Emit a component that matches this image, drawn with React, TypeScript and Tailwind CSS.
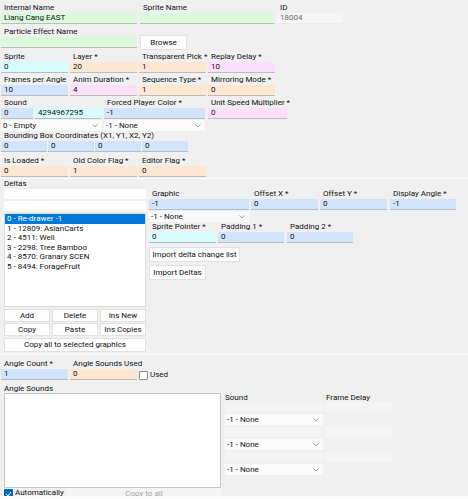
import React from 'react';

// field background tints used by the editor
const BG = {
  green: 'bg-[#dbf9db]',
  cyan: 'bg-[#d7fcfc]',
  peach: 'bg-[#fde6d2]',
  pink: 'bg-[#fbdffb]',
  blue: 'bg-[#d1e4fb]',
  id: 'bg-[#f5f5f5]',
};

const Label: React.FC<{ text: string }> = ({ text }) => (
  <div className="h-[10px] leading-[10px] pl-[3px] whitespace-nowrap">{text}</div>
);

const Box: React.FC<{ value?: string; bg: string; className?: string }> = ({ value, bg, className = '' }) => (
  <div
    className={`h-[11px] leading-[10px] pl-[3px] border-b border-[#bcbcbc] whitespace-nowrap overflow-hidden ${bg} ${className}`}
  >
    {value}
  </div>
);

const Field: React.FC<{ label: string; value?: string; bg: string; w: string; boxClass?: string }> = ({
  label,
  value,
  bg,
  w,
  boxClass,
}) => (
  <div className={`${w} shrink-0`}>
    <Label text={label} />
    <Box value={value} bg={bg} className={boxClass} />
  </div>
);

const Chevron = () => (
  <svg width="6" height="4" viewBox="0 0 6 4" className="shrink-0">
    <polyline points="0.5,0.5 3,3 5.5,0.5" fill="none" stroke="#8a8a8a" strokeWidth="0.8" />
  </svg>
);

const Combo: React.FC<{ value: string; w: string }> = ({ value, w }) => (
  <div className={`${w} h-[11px] bg-[#fafafa] flex items-center justify-between pl-[2px] pr-[4px] shrink-0`}>
    <span className="leading-[10px] whitespace-nowrap">{value}</span>
    <Chevron />
  </div>
);

const Btn: React.FC<{ text: string; className?: string }> = ({ text, className = '' }) => (
  <div
    className={`bg-[#fdfdfd] border border-[#e1e1e1] flex items-center justify-center whitespace-nowrap ${className}`}
  >
    {text}
  </div>
);

const deltas = [
  '0 - Re-drawer -1',
  '1 - 12809: AsianCarts',
  '2 - 4511: Well',
  '3 - 2298: Tree Bamboo',
  '4 - 8570: Granary SCEN',
  '5 - 8494: ForageFruit',
];

export default function App() {
  return (
    <div className="w-[468px] h-[499px] bg-[#f0f0f0] overflow-hidden text-[8px] text-[#111] font-[Roboto,'Liberation_Sans',sans-serif]">
      <div className="pt-[3px] pl-[1px]">
        {/* names */}
        <div className="flex gap-[3px] mb-[3px]">
          <Field label="Internal Name" value="Liang Cang EAST" bg={BG.green} w="w-[136px]" />
          <Field label="Sprite Name" bg={BG.green} w="w-[134px]" />
          <Field label="ID" value="18004" bg={BG.id} w="w-[66px]" boxClass="text-[#6e6e6e] border-[#ececec]" />
        </div>
        <div className="flex gap-[3px] items-start mb-[2px] h-[23px]">
          <Field label="Particle Effect Name" bg={BG.green} w="w-[136px]" />
          <Btn text="Browse" className="w-[47px] h-[15px] mt-[8px]" />
        </div>

        {/* sprite settings */}
        <div className="flex gap-[2px] mb-[2px]">
          <Field label="Sprite" value="0" bg={BG.cyan} w="w-[67px]" />
          <Field label="Layer *" value="20" bg={BG.peach} w="w-[67px]" />
          <Field label="Transparent Pick *" value="1" bg={BG.peach} w="w-[67px]" />
          <Field label="Replay Delay *" value="10" bg={BG.pink} w="w-[67px]" />
        </div>
        <div className="flex gap-[2px] mb-[2px]">
          <Field label="Frames per Angle" value="10" bg={BG.blue} w="w-[67px]" />
          <Field label="Anim Duration *" value="4" bg={BG.pink} w="w-[67px]" />
          <Field label="Sequence Type *" value="1" bg={BG.peach} w="w-[67px]" />
          <Field label="Mirroring Mode *" value="0" bg={BG.peach} w="w-[67px]" />
        </div>
        <div className="flex">
          <div className="w-[101px] shrink-0">
            <Label text="Sound" />
            <div className="flex gap-[2px]">
              <Box value="0" bg={BG.blue} className="w-[32px]" />
              <Box value="4294967295" bg={BG.cyan} className="w-[67px]" />
            </div>
          </div>
          <div className="ml-[2px]">
            <Field label="Forced Player Color *" value="-1" bg={BG.blue} w="w-[101px]" />
          </div>
          <div className="ml-[3px]">
            <Field label="Unit Speed Multiplier *" value="0" bg={BG.pink} w="w-[79px]" />
          </div>
        </div>
        <div className="flex gap-[2px] mt-[1px]">
          <Combo value="0 - Empty" w="w-[101px]" />
          <Combo value="-1 - None" w="w-[101px]" />
        </div>

        <Label text="Bounding Box Coordinates (X1, Y1, X2, Y2)" />
        <div className="flex gap-[1px] mb-[4px]">
          <Box value="0" bg={BG.blue} className="w-[46px] h-[10px]" />
          <Box value="0" bg={BG.blue} className="w-[46px] h-[10px]" />
          <Box value="0" bg={BG.blue} className="w-[46px] h-[10px]" />
          <Box value="0" bg={BG.blue} className="w-[46px] h-[10px]" />
        </div>
        <div className="flex gap-[2px]">
          <Field label="Is Loaded *" value="0" bg={BG.peach} w="w-[67px]" />
          <Field label="Old Color Flag *" value="1" bg={BG.peach} w="w-[67px]" />
          <Field label="Editor Flag *" value="0" bg={BG.peach} w="w-[67px]" />
        </div>
      </div>

      <div className="h-[1px] bg-[#fafafa] mt-[1px]" />

      {/* deltas */}
      <div className="pl-[1px]">
        <Label text="Deltas" />
        <div className="flex">
          <div className="w-[142px] ml-[3px] shrink-0 flex flex-col">
            <div className="h-[10px] bg-white" />
            <div className="h-[10px] bg-white mt-[2px]" />
            <div className="h-[94px] bg-white border border-[#dcdcdc] mt-[2px] overflow-hidden">
              {deltas.map((d, i) => (
                <div
                  key={d}
                  className={`h-[9.5px] leading-[9.5px] pl-[2px] whitespace-nowrap ${
                    i === 0 ? 'bg-[#0078d7] text-white' : ''
                  }`}
                >
                  {d}
                </div>
              ))}
            </div>
            <div className="grid grid-cols-3 gap-x-[2px] gap-y-[1px] mt-[2px]">
              <Btn text="Add" className="h-[13px]" />
              <Btn text="Delete" className="h-[13px]" />
              <Btn text="Ins New" className="h-[13px]" />
              <Btn text="Copy" className="h-[13px]" />
              <Btn text="Paste" className="h-[13px]" />
              <Btn text="Ins Copies" className="h-[13px]" />
            </div>
            <Btn text="Copy all to selected graphics" className="h-[14px] mt-[2px]" />
          </div>

          <div className="ml-[3px] flex flex-col items-start">
            <div className="flex">
              <Field label="Graphic" value="-1" bg={BG.blue} w="w-[100px]" boxClass="h-[10px]" />
              <div className="ml-[2px]">
                <Field label="Offset X *" value="0" bg={BG.blue} w="w-[67px]" boxClass="h-[10px]" />
              </div>
              <div className="ml-[2px]">
                <Field label="Offset Y *" value="0" bg={BG.blue} w="w-[67px]" boxClass="h-[10px]" />
              </div>
              <div className="ml-[3px]">
                <Field label="Display Angle *" value="-1" bg={BG.blue} w="w-[66px]" boxClass="h-[10px]" />
              </div>
            </div>
            <div className="mt-[1px]">
              <Combo value="-1 - None" w="w-[100px]" />
            </div>
            <div className="flex">
              <Field label="Sprite Pointer *" value="0" bg={BG.cyan} w="w-[67px]" boxClass="h-[10px]" />
              <div className="ml-[2px]">
                <Field label="Padding 1 *" value="0" bg={BG.blue} w="w-[66px]" boxClass="h-[10px]" />
              </div>
              <div className="ml-[3px]">
                <Field label="Padding 2 *" value="0" bg={BG.blue} w="w-[66px]" boxClass="h-[10px]" />
              </div>
            </div>
            <Btn text="Import delta change list" className="w-[91px] h-[15px] mt-[4px]" />
            <Btn text="Import Deltas" className="w-[57px] h-[15px] mt-[3px]" />
          </div>
        </div>
      </div>

      <div className="h-[1px] bg-[#fafafa] mt-[2px]" />

      {/* angle sounds */}
      <div className="pl-[1px] pt-[4px]">
        <div className="flex items-end">
          <Field label="Angle Count *" value="1" bg={BG.blue} w="w-[67px]" boxClass="h-[10px]" />
          <div className="ml-[2px]">
            <Field label="Angle Sounds Used" value="0" bg={BG.peach} w="w-[67px]" boxClass="h-[10px]" />
          </div>
          <div className="flex items-center h-[10px] ml-[2px]">
            <div className="w-[9px] h-[9px] bg-white border border-[#8a8a8a] rounded-[1px]" />
            <span className="ml-[2px] leading-[10px]">Used</span>
          </div>
        </div>
        <div className="mt-[4px] h-[9px] leading-[9px] pl-[3px]">Angle Sounds</div>
        <div className="flex">
          <div className="w-[217px] h-[95px] ml-[3px] bg-white border border-[#c4c4c4] shrink-0" />
          <div className="ml-[4px]">
            <div className="flex h-[9px] leading-[9px]">
              <span className="w-[101px]">Sound</span>
              <span>Frame Delay</span>
            </div>
            {[0, 1, 2].map((r) => (
              <div key={r} className={r > 0 ? 'mt-[2px]' : ''}>
                <div className="flex gap-[3px]">
                  <div className="w-[98px] h-[10px] bg-[#f3f3f3]" />
                  <div className="w-[66px] h-[10px] bg-[#f4f4f4]" />
                </div>
                <div className="mt-[2px]">
                  <Combo value="-1 - None" w="w-[98px]" />
                </div>
              </div>
            ))}
          </div>
        </div>
        <div className="flex h-[8px] overflow-hidden">
          <div className="flex items-start ml-[3px] w-[63px] shrink-0">
            <div className="w-[9px] h-[9px] mt-[1px] bg-[#0067c0] rounded-[1px] flex items-center justify-center">
              <svg width="7" height="6" viewBox="0 0 7 6">
                <polyline points="1,3 3,5 6,1" fill="none" stroke="white" strokeWidth="1" />
              </svg>
            </div>
            <span className="ml-[2px] leading-[10px]">Automatically</span>
          </div>
          <div className="w-[154px] bg-[#f5f5f5] text-[#a6a6a6] text-center leading-[12px]">Copy to all</div>
        </div>
      </div>
      <div className="h-[4px] bg-[#fafafa]" />
    </div>
  );
}
